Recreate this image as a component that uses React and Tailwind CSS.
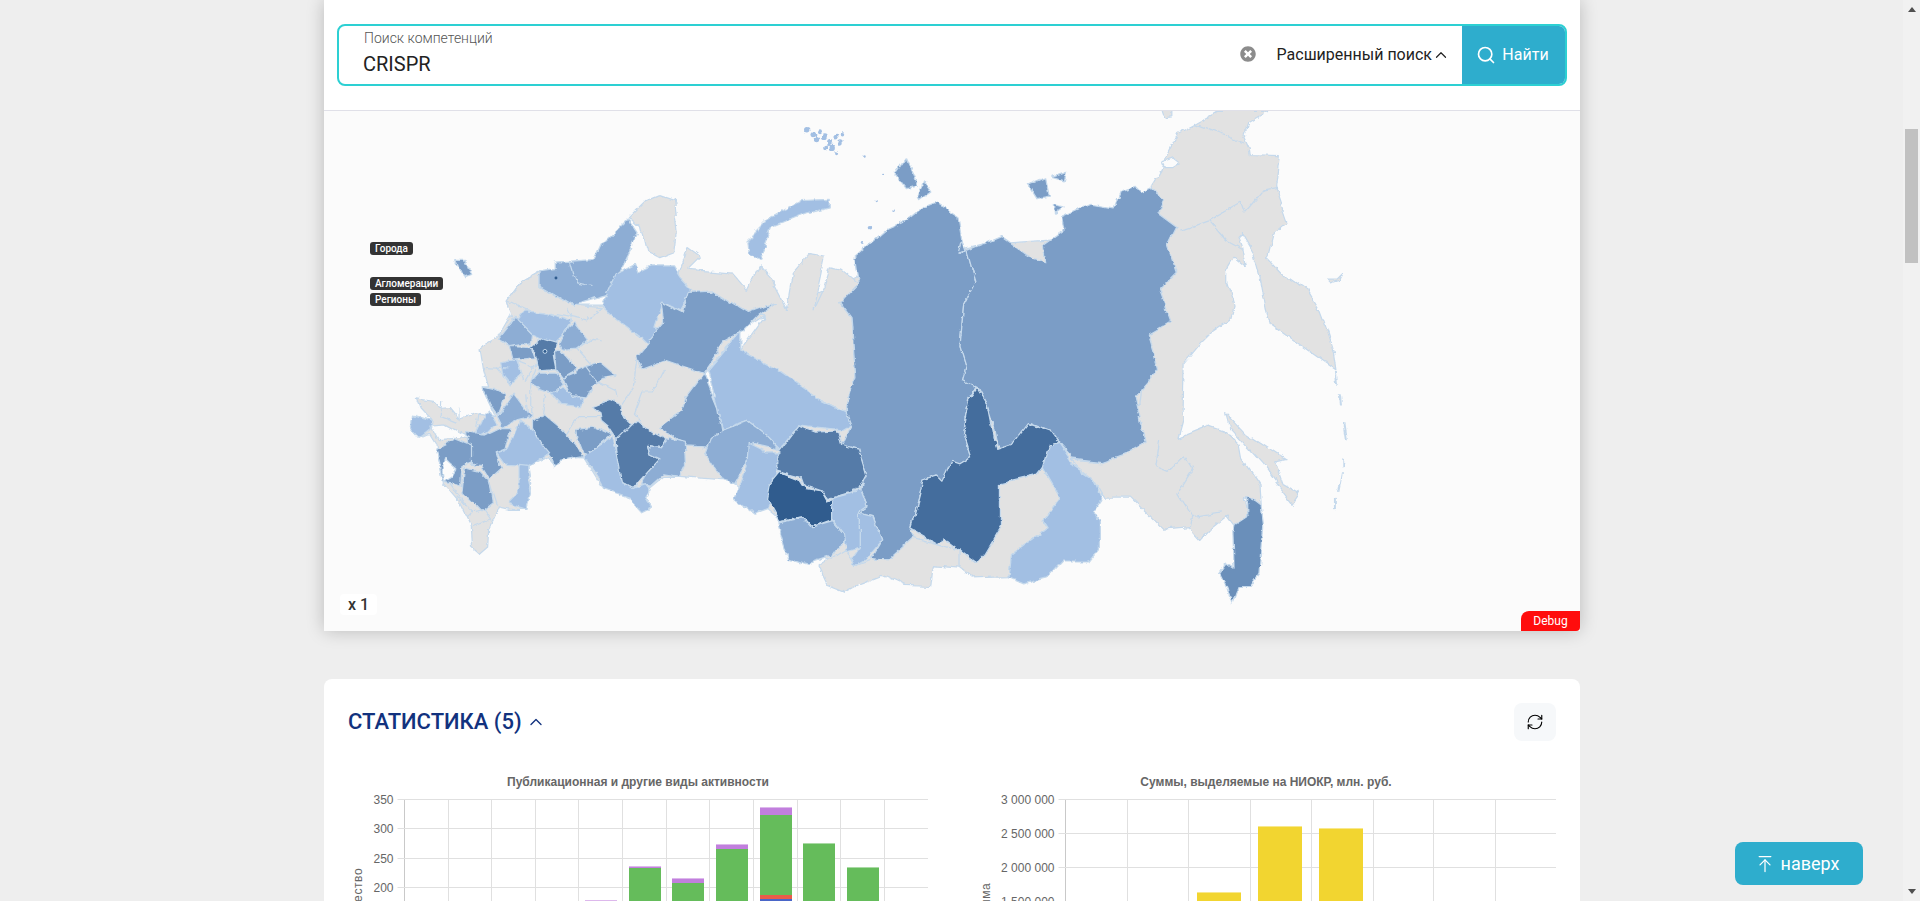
import { ArrowUpToLine, ChevronUp, RefreshCw, Search } from "lucide-react";
import { FaTimesCircle } from "react-icons/fa";

const GRAY = "#e2e2e2";
const L1 = "#a2bfe3";
const L2 = "#8dadd4";
const M = "#7b9dc6";
const M2 = "#6a8fba";
const D1 = "#557ba8";
const D2 = "#446d9d";
const D3 = "#305c8e";

// map shapes, in the coordinates of the shrunk reference
const regions = [
  // grey base
  [GRAY, "600,395 636,425 680,462 720,462 800,462 830,462 925,380 935,300 950,190 800,200 700,225 625,258 590,330"],
  [GRAY, "441,222 425,231 415,245 419,256 408,275 392,284 393,290 395,302 399,316 393,316 395,321 404,340 389,338 376,343 367,332 359,333 354,327 340,325 343,333 353,344 338,339 335,348 343,357 350,354 355,362 357,373 362,395 373,408 384,430 385,446 392,452 399,446 400,430 407,414 416,416 431,416 434,399 431,380 446,373 452,380 457,373 476,374 490,397 514,407 530,416 532,414 525,403 542,389 555,389 591,392 600,395 590,352 575,305 605,271 625,258 553,226 491,250 470,250"],
  [GRAY, "514,177 528,163 538,159 550,163 553,190 551,207 538,212 528,207 523,185"],
  [GRAY, "415,245 425,231 441,222 441,234 468,250 491,252 480,262 450,256 420,262"],
  [GRAY, "553,226 561,203 571,210 561,220 598,223 611,238 621,218 631,229 643,252 648,223 661,208 673,210 664,253 673,234 678,218 688,220 701,231 685,248 695,261 699,310 691,337 671,327 635,302 605,286 625,258 612,256 581,237 563,238 558,255"],
  [GRAY, "668,463 690,449 695,455 698,461 711,456 726,457 743,438 765,444 784,450 797,460 794,472 784,464 762,462 760,479 738,478 721,470 705,476 690,484 675,478"],
  [GRAY, "817,395 847,388 852,382 866,406 852,425 856,431 826,453 824,471 794,472 784,464 784,450 797,460 817,430"],
  [GRAY, "941,152 949,139 952,127 961,109 976,101 994,91 1036,91 1019,101 1016,109 1021,120 1022,127 1044,128 1041,152 1051,181 1041,190 1036,210 1051,226 1067,237 1077,253 1084,272 1089,288 1091,302 1071,288 1037,264 1034,253 1029,226 1024,207 1014,190 1011,193 1014,201 1017,218 1007,210 1001,220 1001,231 1007,250 1004,261 991,270 981,280 967,297 966,343 962,358 987,348 1004,354 1012,362 1014,373 1029,395 1030,414 1017,408 1019,422 1007,430 1001,422 991,430 981,441 972,431 951,433 924,406 901,406 891,389 874,375 900,377 930,330 940,250"],
  [GRAY, "1001,337 1017,354 1051,376 1041,378 1047,395 1062,403 1056,412 1047,400 1031,378 1014,359 1004,348"],
  [GRAY, "949,91 957,91 957,96 951,97"],
  [GRAY, "1084,228 1092,228 1097,223 1094,229 1087,231"],
  ["#fbfbfb", "949,132 958,129 963,133 958,136 951,136"],
  // north
  [L2, "455,214 485,212 491,199 513,178 521,190 510,212 501,231 495,242 468,250 441,234 441,222 455,220"],
  [L1, "491,250 503,223 518,215 521,223 531,218 550,218 555,226 565,237 556,253 541,246 534,268 544,270 531,283 523,275 504,261"],
  [M, "520,291 542,264 540,246 558,255 563,238 581,237 612,256 634,248 620,258 607,271 591,280 574,305 542,294 523,301"],
  [L1, "610,196 628,178 655,163 678,162 678,169 658,174 631,185 620,212 611,207"],
  [M, "373,211 381,211 386,225 380,227"],
  [M, "731,141 740,128 745,139 750,152 741,154"],
  [M, "750,161 755,147 761,156 751,163"],
  // Siberia
  [L1, "578,303 605,271 605,286 635,302 671,327 691,337 695,347 688,351 651,347 636,366 625,355 611,344 590,351 586,332"],
  [M, "575,305 586,332 590,355 580,366 558,365 538,350 558,335 561,324"],
  [L2, "590,352 611,344 625,355 636,367 615,362 610,377 600,395 590,392 576,370 580,359"],
  [L1, "611,362 625,369 636,369 636,395 626,416 615,420 600,408 610,381"],
  [M, "698,210 723,188 741,180 755,169 765,165 784,177 787,196 797,231 787,250 784,283 789,299 786,310 799,313 791,326 786,354 792,373 784,378 770,393 765,388 753,392 743,430 747,438 726,457 718,457 711,456 720,441 713,422 701,419 708,414 703,401 708,389 701,366 688,363 695,347 691,337 699,310 695,261 685,248 701,231"],
  [D1, "651,347 666,353 685,352 688,363 701,366 708,389 702,400 675,408 670,401 658,397 655,389 636,384 636,367"],
  [D3, "638,385 653,391 658,399 670,401 675,410 680,408 680,425 663,431 656,423 636,426 626,408 628,397"],
  [L2, "636,427 656,423 663,431 680,426 690,438 678,455 660,461 645,456"],
  [L1, "680,407 703,401 708,414 701,419 701,446 690,449 688,435 680,425"],
  [L1, "701,419 713,422 720,441 708,455 698,461 695,455 701,446"],
  [M, "784,207 817,193 841,210 854,214 852,200 869,188 867,177 891,166 909,169 914,156 926,152 932,158 941,154 952,162 947,174 962,185 954,201 961,223 947,237 956,261 937,272 946,302 927,324 936,362 924,369 901,377 874,374 864,363 856,352 841,346 829,363 816,369 812,348 807,332 799,317 786,310 789,299 784,283 787,250 797,231 787,196"],
  [M, "839,152 854,146 857,161 846,163"],
  [M, "859,144 871,140 869,147"],
  [M, "861,167 869,169 862,174"],
  [D2, "743,431 753,392 765,388 770,393 778,376 784,378 792,373 786,354 791,327 798,317 807,332 814,367 826,363 839,346 856,352 864,363 857,365 861,378 852,382 847,388 817,395 817,430 804,452 797,460 784,450 771,440 765,444"],
  [L1, "852,382 857,365 864,363 874,378 891,389 899,408 892,418 897,425 897,449 889,459 867,459 856,471 836,476 824,471 826,453 856,431 852,425 866,406"],
  [M2, "1019,407 1026,411 1030,414 1032,430 1029,468 1021,479 1011,479 1006,493 1002,479 996,467 1001,460 1007,464 1006,435 1007,430 1019,422"],
  // European part
  [L2, "407,278 422,259 434,272 433,280 415,283"],
  [L1, "423,261 429,253 446,255 468,263 460,274 455,279 441,275 434,272"],
  [L2, "457,283 463,270 470,265 480,278 471,286 460,287"],
  [D1, "433,283 442,275 456,279 451,289 453,301 440,302 437,287"],
  [M, "415,283 434,284 437,293 418,295"],
  [M, "452,287 457,286 471,302 459,309 453,301"],
  [M, "459,309 479,301 491,297 504,308 493,310 483,316 478,325 466,324"],
  [L2, "434,312 441,304 453,304 460,314 453,321 442,317"],
  [L1, "451,321 460,317 468,325 476,325 474,333 460,331"],
  [D1, "483,333 498,327 506,331 508,340 517,348 504,359 498,350 491,344 490,338"],
  [D1, "504,359 520,343 534,354 543,359 540,365 528,363 530,370 539,374 527,387 517,399 509,395 505,381"],
  [L2, "543,359 558,363 559,381 555,389 542,387 531,397 524,395 527,387 539,374 530,370 528,363 540,365"],
  [M, "471,350 485,348 500,355 478,373 472,358"],
  [L1, "476,373 501,357 505,373 509,395 517,399 527,395 531,400 527,407 532,414 524,418 514,407 493,400 487,389"],
  [M2, "434,343 444,338 456,348 470,362 476,373 457,376 452,381 449,373 441,362 434,348"],
  [L1, "406,369 416,366 425,343 436,351 442,362 448,369 431,381 414,380"],
  [L2, "406,340 419,321 434,340 421,343 411,350"],
  [M, "393,316 402,318 412,323 406,339 399,329"],
  [L1, "389,357 399,335 406,347 400,353 392,358"],
  [M, "381,354 396,357 411,350 418,350 414,366 406,369 410,382 400,391 393,380 385,380 382,365"],
  [M, "355,366 370,359 385,365 385,378 378,381 377,396 361,393 358,376"],
  ["#fbfbfb", "363,373 367,377 373,382 369,389 362,393 361,384"],
  [M, "380,382 392,385 399,392 402,410 392,418 378,403"],
  [L1, "423,380 431,381 431,389 434,403 431,416 415,411 423,403"],
  [L1, "408,298 421,295 425,306 415,316 410,308"],
  [L1, "335,348 336,339 353,344 351,351 343,357"],
  ["#fbfbfb", "351,348 362,347 384,359 370,358 357,359"],
];

// inner borders of the grey regions
const borders = [
  "345,245 410,270 395,305 395,410",
  "605,180 580,175 530,210 575,260",
  "560,265 590,305 650,335 655,355",
  "710,240 700,320 665,375",
  "790,270 760,330 725,330 700,400 720,420",
  "600,410 540,410 520,430 500,460",
  "440,340 430,400",
  "380,340 385,400",
  "125,360 120,410 170,430",
  "180,380 180,430",
  "240,400 230,470",
  "210,700 250,690 270,720 210,745",
  "170,650 215,700 200,715",
  "285,265 330,320",
  "250,265 325,270",
  "350,240 370,300",
  "410,250 375,305",
  "260,590 290,680",
  "150,610 200,680",
  "520,130 500,90",
  "325,60 390,90",
];

const eastBorders = [
  "976,101 1017,116",
  "964,188 987,180 1014,165 1017,173 1032,155 1042,153",
  "987,180 1001,196 1014,203",
  "947,359 944,381 954,385 967,373 974,384 962,403 974,422 997,418",
  "974,422 972,431",
  "465,214 470,231 483,234",
];

const islands = [
  [658, 106, 2.2], [663, 110, 2], [668, 108, 1.6], [666, 114, 2.2], [672, 112, 2.4], [677, 116, 2.4],
  [682, 112, 2], [686, 116, 2.2], [680, 120, 2.6], [674, 120, 1.8], [688, 110, 1.4], [684, 124, 1.2],
  [706, 127, 1], [722, 142, 1], [716, 165, 0.9], [728, 172, 1.2], [710, 186, 1.4], [705, 198, 1.2],
];
const kurils = ["1091,303 1092,315", "1095,322 1096,332", "1098,345 1100,358", "1097,372 1097,380", "1096,384 1093,400", "1091,405 1091,415"];

function RussiaMap() {
  return (
    <svg viewBox="264.6 90.65 1025.7 424.7" className="block h-full w-full">
      <defs>
        <filter id="rough" x="264" y="90" width="1030" height="430" filterUnits="userSpaceOnUse" colorInterpolationFilters="sRGB">
          <feTurbulence type="fractalNoise" baseFrequency="0.035" numOctaves="1" seed="7" result="wide" />
          <feDisplacementMap in="SourceGraphic" in2="wide" scale="7" xChannelSelector="R" yChannelSelector="G" result="bent" />
          <feTurbulence type="fractalNoise" baseFrequency="0.22" numOctaves="2" seed="4" result="fine" />
          <feDisplacementMap in="bent" in2="fine" scale="2.6" xChannelSelector="G" yChannelSelector="R" />
        </filter>
      </defs>
      <g filter="url(#rough)" stroke="#c5d9ec" strokeWidth="1" strokeLinejoin="round">
        {regions.map(([fill, points], i) => (
          <polygon key={i} points={points} fill={fill} />
        ))}
        <g transform="translate(326.7 228.7) scale(0.2722)" fill="none" strokeWidth="3.6">
          {borders.map((points, i) => (
            <polyline key={i} points={points} />
          ))}
        </g>
        <g fill="none">
          {eastBorders.map((points, i) => (
            <polyline key={i} points={points} />
          ))}
        </g>
        {islands.map(([cx, cy, r]) => (
          <circle key={`${cx}-${cy}`} cx={cx} cy={cy} r={r} fill={L1} stroke="none" />
        ))}
        {kurils.map((points, i) => (
          <polyline key={i} points={points} fill="none" strokeWidth="1.6" />
        ))}
      </g>
      <circle cx="454" cy="227" r="1.2" fill={D3} />
      <circle cx="445" cy="287" r="1.6" fill={D3} stroke="#c5d9ec" strokeWidth="0.8" />
    </svg>
  );
}

function Tag({ children, className }) {
  return (
    <span className={`absolute left-[46px] flex h-[13px] items-center rounded-[3px] bg-[#333333] px-[5px] text-[10px] leading-none font-medium text-white ${className}`}>
      {children}
    </span>
  );
}

// bars: x, width, then segments from the top down
const leftBars = [
  { x: 585, w: 32, parts: [[900, 902, "#c17fdd"], [902, 1000, "#65bc5b"]] },
  { x: 629, w: 32, parts: [[866, 868, "#c17fdd"], [868, 1000, "#65bc5b"]] },
  { x: 672, w: 32, parts: [[878, 883, "#c17fdd"], [883, 1000, "#65bc5b"]] },
  { x: 716, w: 32, parts: [[844, 849, "#c17fdd"], [849, 1000, "#65bc5b"]] },
  { x: 760, w: 32, parts: [[807, 815, "#c17fdd"], [815, 895, "#65bc5b"], [895, 899, "#e85c4a"], [899, 1000, "#4a66c8"]] },
  { x: 803, w: 32, parts: [[843, 1000, "#65bc5b"]] },
  { x: 847, w: 32, parts: [[867, 1000, "#65bc5b"]] },
];
const rightBars = [
  { x: 1197, w: 44, parts: [[892, 1000, "#f2d530"]] },
  { x: 1258, w: 44, parts: [[826, 1000, "#f2d530"]] },
  { x: 1319, w: 44, parts: [[828, 1000, "#f2d530"]] },
];

function Chart({ left, title, yTitle, yTitleX, axisX, right, ticks, columns, bars }) {
  return (
    <svg
      viewBox={`${left} 770 580 260`}
      className="block h-[260px] w-[580px] shrink-0 font-['Liberation_Sans',Arial,sans-serif]"
    >
      <text x={left + 290} y="786" textAnchor="middle" fontSize="12" fontWeight="700" fill="#666666">
        {title}
      </text>
      {columns.map((x) => (
        <line key={x} x1={x} x2={x} y1="799" y2="1030" stroke="#e0e0e0" />
      ))}
      <line x1={axisX} x2={axisX} y1="799" y2="1030" stroke="#c9c9c9" />
      {ticks.map(([label, y]) => (
        <g key={label}>
          <line x1={axisX - 7} x2={right} y1={y} y2={y} stroke="#e0e0e0" />
          <text x={axisX - 11} y={y + 4} textAnchor="end" fontSize="12" fill="#666666">
            {label}
          </text>
        </g>
      ))}
      <text
        x={yTitleX}
        y="903"
        transform={`rotate(-90 ${yTitleX} 903)`}
        textAnchor="middle"
        dominantBaseline="middle"
        fontSize="12"
        letterSpacing="0.6"
        fill="#666666"
      >
        {yTitle}
      </text>
      {bars.map((bar) => (
        <g key={bar.x}>
          {bar.parts.map(([top, bottom, color]) => (
            <rect key={top} x={bar.x} y={top} width={bar.w} height={bottom - top} fill={color} />
          ))}
          <rect x={bar.x} y={bar.parts[0][0]} width={bar.w} height={1} fill="#ffffff" opacity="0.45" />
        </g>
      ))}
    </svg>
  );
}

export default function App() {
  return (
    <div className="relative flex h-[901px] overflow-hidden bg-[#eeeeee] font-['Roboto',sans-serif]">
      <main className="min-w-0 flex-1 pl-[324px]">
        <div className="w-[1256px]">
          {/* search + map */}
          <section className="relative rounded-b bg-white shadow-[0_0_18px_rgba(0,0,0,0.22)]">
            <div className="h-[111px] border-b border-[#e0e0e8] px-[13px] pt-6">
              <div className="flex h-[62px] overflow-hidden rounded-lg border-2 border-[#2dd0d3]">
                <div className="min-w-0 flex-1 pl-[25px] pt-1">
                  <div className="text-sm leading-4 font-light text-[#555555]">Поиск компетенций</div>
                  <div className="-ml-px mt-[7px] text-xl leading-[22px] text-[#222222]">CRISPR</div>
                </div>
                <div className="flex items-center text-[#222222]">
                  <FaTimesCircle className="mb-[2px] h-4 w-4 text-[#8c8c8c]" />
                  <span className="ml-[21px] text-base">Расширенный поиск</span>
                  <ChevronUp className="h-[18px] w-[18px]" strokeWidth={1.6} />
                  <span className="w-[12px]" />
                </div>
                <button className="flex w-[103px] items-center justify-center gap-[6px] bg-[#2eadcd] pr-[2px] text-base text-white">
                  <Search className="h-5 w-5" strokeWidth={2} />
                  Найти
                </button>
              </div>
            </div>
            <div className="relative h-[520px] bg-[#fbfbfb]">
              <RussiaMap />
              <Tag className="top-[131px]">Города</Tag>
              <Tag className="top-[166px]">Агломерации</Tag>
              <Tag className="top-[182px]">Регионы</Tag>
              <span className="absolute left-[16px] top-[483px] flex h-[21px] w-[37px] items-center justify-center rounded bg-white text-base font-medium text-[#333333]">
                x 1
              </span>
              <span className="absolute bottom-0 right-0 flex h-5 w-[59px] items-center justify-center rounded-tl-lg rounded-br bg-[#ff0d0d] text-xs text-white">
                Debug
              </span>
            </div>
          </section>

          {/* statistics */}
          <section className="mt-12 rounded-lg bg-white px-6 pt-6 pb-10">
            <div className="flex h-[38px] items-center justify-between">
              <div className="flex items-center gap-[4px] text-[#12327e]">
                <h2 className="-mt-[2px] text-[22px] font-medium">СТАТИСТИКА (5)</h2>
                <ChevronUp className="h-5 w-5" strokeWidth={1.6} />
              </div>
              <button className="flex h-[38px] w-[42px] items-center justify-center rounded-lg bg-[#f6f8fa]">
                <RefreshCw className="h-[18px] w-[18px] text-black" strokeWidth={1.5} />
              </button>
            </div>
            <div className="mt-[29px] flex gap-12">
              <Chart
                left={348}
                title="Публикационная и другие виды активности"
                yTitle="Количество"
                yTitleX={359}
                axisX={404.5}
                right={928}
                ticks={[["350", 799.5], ["300", 828.5], ["250", 858.5], ["200", 887.5]]}
                columns={[448.5, 491.5, 535.5, 578.5, 622.5, 666.5, 709.5, 753.5, 797.5, 840.5, 884.5]}
                bars={leftBars}
              />
              <Chart
                left={976}
                title="Суммы, выделяемые на НИОКР, млн. руб."
                yTitle="Сумма"
                yTitleX={987}
                axisX={1065.5}
                right={1556}
                ticks={[["3 000 000", 799.5], ["2 500 000", 833.5], ["2 000 000", 867.5], ["1 500 000", 901.5]]}
                columns={[1127.5, 1188.5, 1250.5, 1311.5, 1373.5, 1433.5, 1495.5]}
                bars={rightBars}
              />
            </div>
          </section>
        </div>
      </main>

      {/* browser scrollbar */}
      <div className="flex w-[17px] shrink-0 flex-col items-center bg-[#f1f1f1]">
        <svg viewBox="0 0 8 5" className="mt-[7px] h-[5px] w-2 shrink-0">
          <path d="M4 0 8 5H0Z" fill="#505050" />
        </svg>
        <div className="mt-[117px] h-[134px] w-[13px] shrink-0 bg-[#c1c1c1]" />
        <svg viewBox="0 0 8 5" className="mt-auto mb-[7px] h-[5px] w-2 shrink-0">
          <path d="M0 0H8L4 5Z" fill="#505050" />
        </svg>
      </div>

      <button className="fixed left-[1735px] top-[842px] flex h-[43px] w-[128px] items-center justify-center gap-[6px] rounded-lg bg-[#2eadcd] pr-[4px] text-lg text-white">
        <ArrowUpToLine className="h-5 w-5" strokeWidth={1.5} />
        наверх
      </button>
    </div>
  );
}
